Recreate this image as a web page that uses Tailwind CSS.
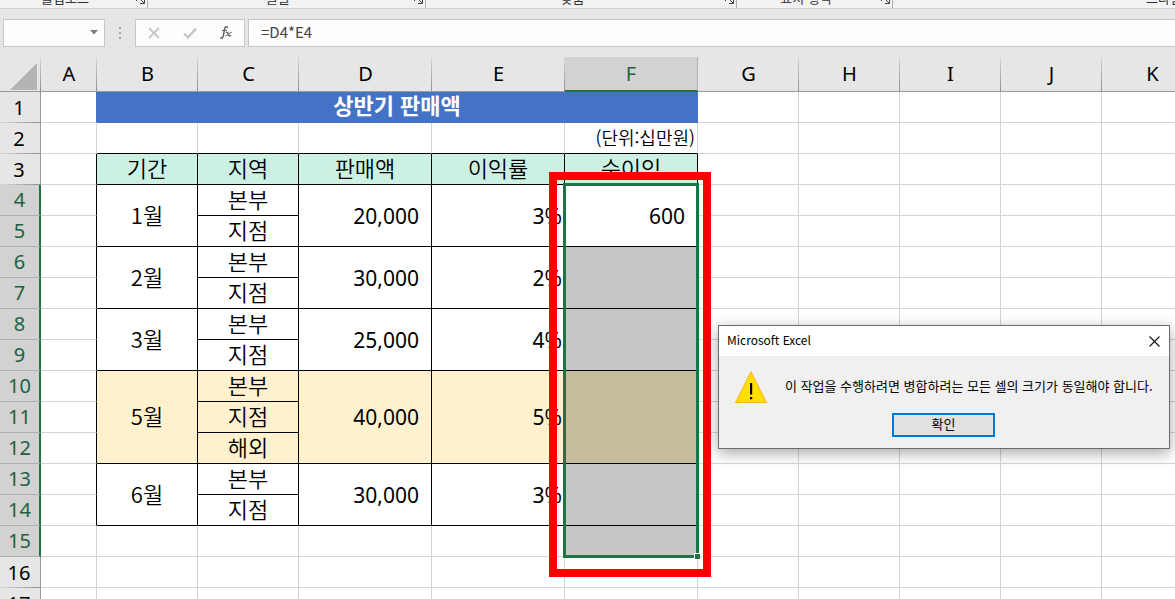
<!DOCTYPE html>
<html lang="ko">
<head>
<meta charset="utf-8">
<meta name="viewport" content="width=device-width, initial-scale=1">
<title>상반기 판매액</title>
<script src="https://cdn.jsdelivr.net/npm/@tailwindcss/browser@4"></script>
</head>
<body class="flex h-screen flex-col overflow-hidden bg-[#e6e6e6] font-['Noto_Sans_CJK_KR',sans-serif] text-black">

<!-- Ribbon group captions -->
<header class="flex h-[9px] shrink-0 items-end overflow-hidden border-b border-[#d0d0d0] bg-[#f2f2f2] text-[13px] leading-4 text-[#333]">
  <div class="flex w-[148px] shrink-0 items-end border-r border-[#b0b0b0] pb-[2px]"><span class="flex-1 pr-[6px] text-center">클립보드</span>
    <svg class="mr-[2px] mb-[2px] size-[9px]" viewBox="0 0 9 9" fill="none" stroke="#444"><path d="M.5 6V.5H7M3 3l5 5M8.500 4v4.500H4"/></svg></div>
  <div class="flex w-[278px] shrink-0 items-end border-r border-[#b0b0b0] pb-[2px]"><span class="flex-1 pr-[6px] text-center">글꼴</span>
    <svg class="mr-[2px] mb-[2px] size-[9px]" viewBox="0 0 9 9" fill="none" stroke="#444"><path d="M.5 6V.5H7M3 3l5 5M8.500 4v4.500H4"/></svg></div>
  <div class="flex w-[311px] shrink-0 items-end border-r border-[#b0b0b0] pb-[2px]"><span class="flex-1 pr-[6px] text-center">맞춤</span>
    <svg class="mr-[2px] mb-[2px] size-[9px]" viewBox="0 0 9 9" fill="none" stroke="#444"><path d="M.5 6V.5H7M3 3l5 5M8.500 4v4.500H4"/></svg></div>
  <div class="flex w-[156px] shrink-0 items-end border-r border-[#b0b0b0] pb-[2px]"><span class="flex-1 pr-[6px] text-center">표시 형식</span>
    <svg class="mr-[2px] mb-[2px] size-[9px]" viewBox="0 0 9 9" fill="none" stroke="#444"><path d="M.5 6V.5H7M3 3l5 5M8.500 4v4.500H4"/></svg></div>
  <div class="w-[542px] shrink-0 pb-[2px] text-center">스타일</div>
</header>

<!-- Formula bar -->
<div class="flex h-12 shrink-0 items-center pb-[1px] pl-[3px]">
  <div class="flex h-7 w-[102px] items-center border border-[#c6c6c6] bg-[#fdfdfd] pr-1">
    <input aria-label="이름 상자" class="h-full min-w-0 flex-1 bg-transparent px-1 text-sm outline-none">
    <button aria-label="이름 목록" class="p-[2px]"><svg class="h-[5px] w-2" viewBox="0 0 8 5"><path d="M0 0h8L4 4.500z" fill="#7b8087"/></svg></button>
  </div>
  <svg class="mx-[14px] h-3 w-[2px]" viewBox="0 0 2 12" fill="#a6a6a6"><path d="M0 0h2v2H0zM0 5h2v2H0zM0 10h2v2H0z"/></svg>
  <div class="flex h-7 w-[110px] items-center justify-between border border-[#c6c6c6] bg-[#fdfdfd] px-3">
    <button aria-label="취소"><svg class="size-3" viewBox="0 0 12 12" fill="none" stroke="#c6c6c6" stroke-width="1.800"><path d="M1 1l10 10M11 1L1 11"/></svg></button>
    <button aria-label="입력"><svg class="h-3 w-[14px]" viewBox="0 0 14 12" fill="none" stroke="#c4c4c4" stroke-width="2.400"><path d="M1 6.500l4 4L13 1.500"/></svg></button>
    <button aria-label="함수 삽입"><svg class="h-[13px] w-3" viewBox="0 0 12 13" fill="none" stroke="#666" stroke-linecap="round"><path d="M7.500 1.200C6 .2 5 1 4.600 3L3.200 10C2.900 11.800 1.900 12.500.7 11.900" stroke-width="1.500"/><path d="M2.500 4.500h4" stroke-width="1.200"/><path d="M6.300 6.300c1.200-.4 1.600.3 2 1.700s.8 2.500 2.300 1.700" stroke-width="1.400"/><path d="M11.300 6.300C9.500 6 7.800 10.200 5.900 9.800" stroke-width="1"/></svg></button>
  </div>
  <input aria-label="수식 입력줄" value="=D4*E4" class="ml-[3px] h-7 min-w-0 flex-1 border border-r-0 border-[#c6c6c6] bg-[#fdfdfd] px-3 pb-[2px] text-[15px] text-[#444] outline-none">
</div>

<!-- Worksheet -->
<main class="relative flex-1">
  <div class="absolute inset-0 overflow-hidden">
    <table class="w-[1202px] table-fixed border-separate border-spacing-0 bg-white">
      <colgroup>
        <col class="w-[41px]"><col class="w-14"><col class="w-[101px]"><col class="w-[101px]"><col class="w-[133px]"><col class="w-[133px]"><col class="w-[133px]"><col class="w-[101px]"><col class="w-[101px]"><col class="w-[101px]"><col class="w-[101px]"><col class="w-[101px]">
      </colgroup>
      <thead><tr id="letters" class="h-[35px]"></tr></thead>
      <tbody id="rows"></tbody>
    </table>
  </div>

  <!-- Selected range -->
  <div class="pointer-events-none absolute top-[126px] left-[563px] h-[375px] w-[136px] border-3 border-[#217346]">
    <div class="absolute -right-1 -bottom-1 size-[6px] border-t border-l border-white bg-[#217346]"></div>
  </div>
  <!-- Red highlight frame -->
  <div class="pointer-events-none absolute top-[115px] left-[549px] h-[405px] w-[162px] border-8 border-[#ff0000]"></div>

  <!-- Alert -->
  <section role="alertdialog" aria-labelledby="alert-title" aria-describedby="alert-text" class="absolute top-[268px] left-[718px] flex w-[452px] flex-col border border-[#6b6b6b] bg-[#f0f0f0] text-[13px] leading-5 shadow-[0_4px_14px_rgba(0,0,0,0.35)]">
    <div class="flex h-[30px] items-center justify-between bg-white pr-[9px] pl-2">
      <h2 id="alert-title" class="pb-[2px] text-xs">Microsoft Excel</h2>
      <button aria-label="닫기"><svg class="size-[11px]" viewBox="0 0 11 11" fill="none" stroke="#111" stroke-width="1.100"><path d="M.5.5l10 10M10.500.5l-10 10"/></svg></button>
    </div>
    <div class="flex items-center pt-[15px] pl-4">
      <svg class="size-8 shrink-0" viewBox="0 0 32 32"><path d="M16 1L31.300 31.400H.700z" fill="#ffe000" stroke="#fdbb1c" stroke-width="1.200"/><path d="M15 12h2.200v11.500H15zM15 26h2.200v2.200H15z" fill="#000"/></svg>
      <p id="alert-text" class="pb-[2px] pl-[18px] whitespace-nowrap">이 작업을 수행하려면 병합하려는 모든 셀의 크기가 동일해야 합니다.</p>
    </div>
    <button class="mt-[10px] mb-[11px] ml-[173px] h-6 w-[103px] border-2 border-[#0078d7] bg-[#e1e1e1] pb-[2px] leading-[18px]">확인</button>
  </section>
</main>

<script>
const GRID = 'border-[#d4d4d4]';
const BASE = 'p-0 border-r border-b whitespace-nowrap overflow-hidden ';
const KO = 'pb-1 text-[22px] leading-[26px] font-[350] text-center ';
const NUM = "text-[21px] leading-[30px] font-['Noto_Sans'] text-right ";
const MINT = 'bg-[#ccf1e2] border-black ';
const CREAM = 'bg-[#fff1ce] border-black ';

const letters = document.getElementById('letters');
const corner = document.createElement('td');
corner.className = 'p-0 border-b border-[#999] bg-[#e6e6e6] bg-[linear-gradient(to_bottom,#d8d8d8,#8e8e8e)] bg-[length:1px_100%] bg-right bg-no-repeat';
corner.innerHTML = '<svg class="mt-1 ml-[10px] size-[27px]" viewBox="0 0 27 27"><path d="M27 0v27H0z" fill="#b4b4b4"/></svg>';
letters.append(corner);
for (const c of 'ABCDEFGHIJK') {
  const th = document.createElement('th');
  th.scope = 'col';
  th.textContent = c;
  th.className = c === 'F'
    ? "p-0 border-r border-[#b1b1b1] border-b-2 border-b-[#217346] bg-[#d2d2d2] text-xl leading-8 font-normal font-['Noto_Sans'] text-[#1e6140]"
    : "p-0 border-b border-[#999] bg-[#e6e6e6] bg-[linear-gradient(to_bottom,#d8d8d8,#8e8e8e)] bg-[length:1px_100%] bg-right bg-no-repeat text-xl leading-8 font-normal font-['Noto_Sans']";
  letters.append(th);
}

// cells[row] = list of [column, text, classes, rowspan, colspan]
const cells = {
  1: [['B', '상반기 판매액', 'pb-[6px] text-[22px] leading-6 font-bold text-center text-white bg-[#4472c4] border-[#4472c4]', 1, 5]],
  2: ['B', 'C', 'D', 'E'].map(c => [c, '', 'border-r-[#d4d4d4] border-b-black']).concat([['F', '(단위:십만원)', 'border-r-[#d4d4d4] border-b-black pr-[2px] pb-[2px] text-lg leading-7 font-[350] text-right']]),
  3: [['B', '기간'], ['C', '지역'], ['D', '판매액'], ['E', '이익률'], ['F', '순이익']].map(([c, t]) => [c, t, KO + MINT]),
};
const months = [
  [4, '1월', ['본부', '지점'], '20,000', '3%', '600', 'bg-white border-black '],
  [6, '2월', ['본부', '지점'], '30,000', '2%', '', 'bg-[#c6c6c6] border-black '],
  [8, '3월', ['본부', '지점'], '25,000', '4%', '', 'bg-[#c6c6c6] border-black '],
  [10, '5월', ['본부', '지점', '해외'], '40,000', '5%', '', 'bg-[#c6bd9c] border-black '],
  [13, '6월', ['본부', '지점'], '30,000', '3%', '', 'bg-[#c6c6c6] border-black '],
];
for (const [row, month, places, sales, rate, profit, fill] of months) {
  const n = places.length, tone = n === 3 ? CREAM : 'border-black ';
  cells[row] = [
    ['B', month, KO + tone, n], ['C', places[0], KO + tone],
    ['D', sales, NUM + tone + 'pr-3', n], ['E', rate, NUM + tone + 'pr-[2px]', n], ['F', profit, NUM + fill + 'pr-3', n],
  ];
  for (let i = 1; i < n; i++) cells[row + i] = [['C', places[i], KO + tone]];
}
cells[15] = [['F', '', 'bg-[#c6c6c6] ' + GRID]];

const taken = new Set();
for (let r = 1; r <= 17; r++) {
  const tr = document.createElement('tr');
  tr.className = 'h-[31px]';
  const th = document.createElement('th');
  th.scope = 'row';
  th.textContent = r;
  th.className = r >= 4 && r <= 15
    ? "p-0 border-b border-b-[#b1b1b1] border-r-2 border-r-[#217346] bg-[#d2d2d2] text-xl leading-[30px] font-normal font-['Noto_Sans'] text-[#1e6140]"
    : "p-0 pr-[2px] border-r border-r-[#999] bg-[#e6e6e6] bg-[linear-gradient(to_right,#d8d8d8,#8e8e8e)] bg-[length:100%_1px] bg-bottom bg-no-repeat text-xl leading-[30px] font-normal font-['Noto_Sans']";
  tr.append(th);
  for (const c of 'ABCDEFGHIJK') {
    if (taken.has(c + r)) continue;
    const td = document.createElement('td');
    const cell = (cells[r] || []).find(x => x[0] === c);
    if (cell) {
      const [, text, cls, rs = 1, cs = 1] = cell;
      td.textContent = text;
      td.className = BASE + cls;
      td.rowSpan = rs;
      td.colSpan = cs;
      for (let i = 0; i < rs; i++) for (let j = 0; j < cs; j++)
        taken.add(String.fromCharCode(c.charCodeAt(0) + j) + (r + i));
    } else if (c === 'A' && r === 1) td.className = BASE + 'border-b-[#d4d4d4] border-r-[#4472c4]';
    else if (c === 'A' && r >= 3 && r <= 14) td.className = BASE + 'border-b-[#d4d4d4] border-r-black';
    else td.className = BASE + GRID;
    tr.append(td);
  }
  document.getElementById('rows').append(tr);
}
</script>
</body>
</html>
